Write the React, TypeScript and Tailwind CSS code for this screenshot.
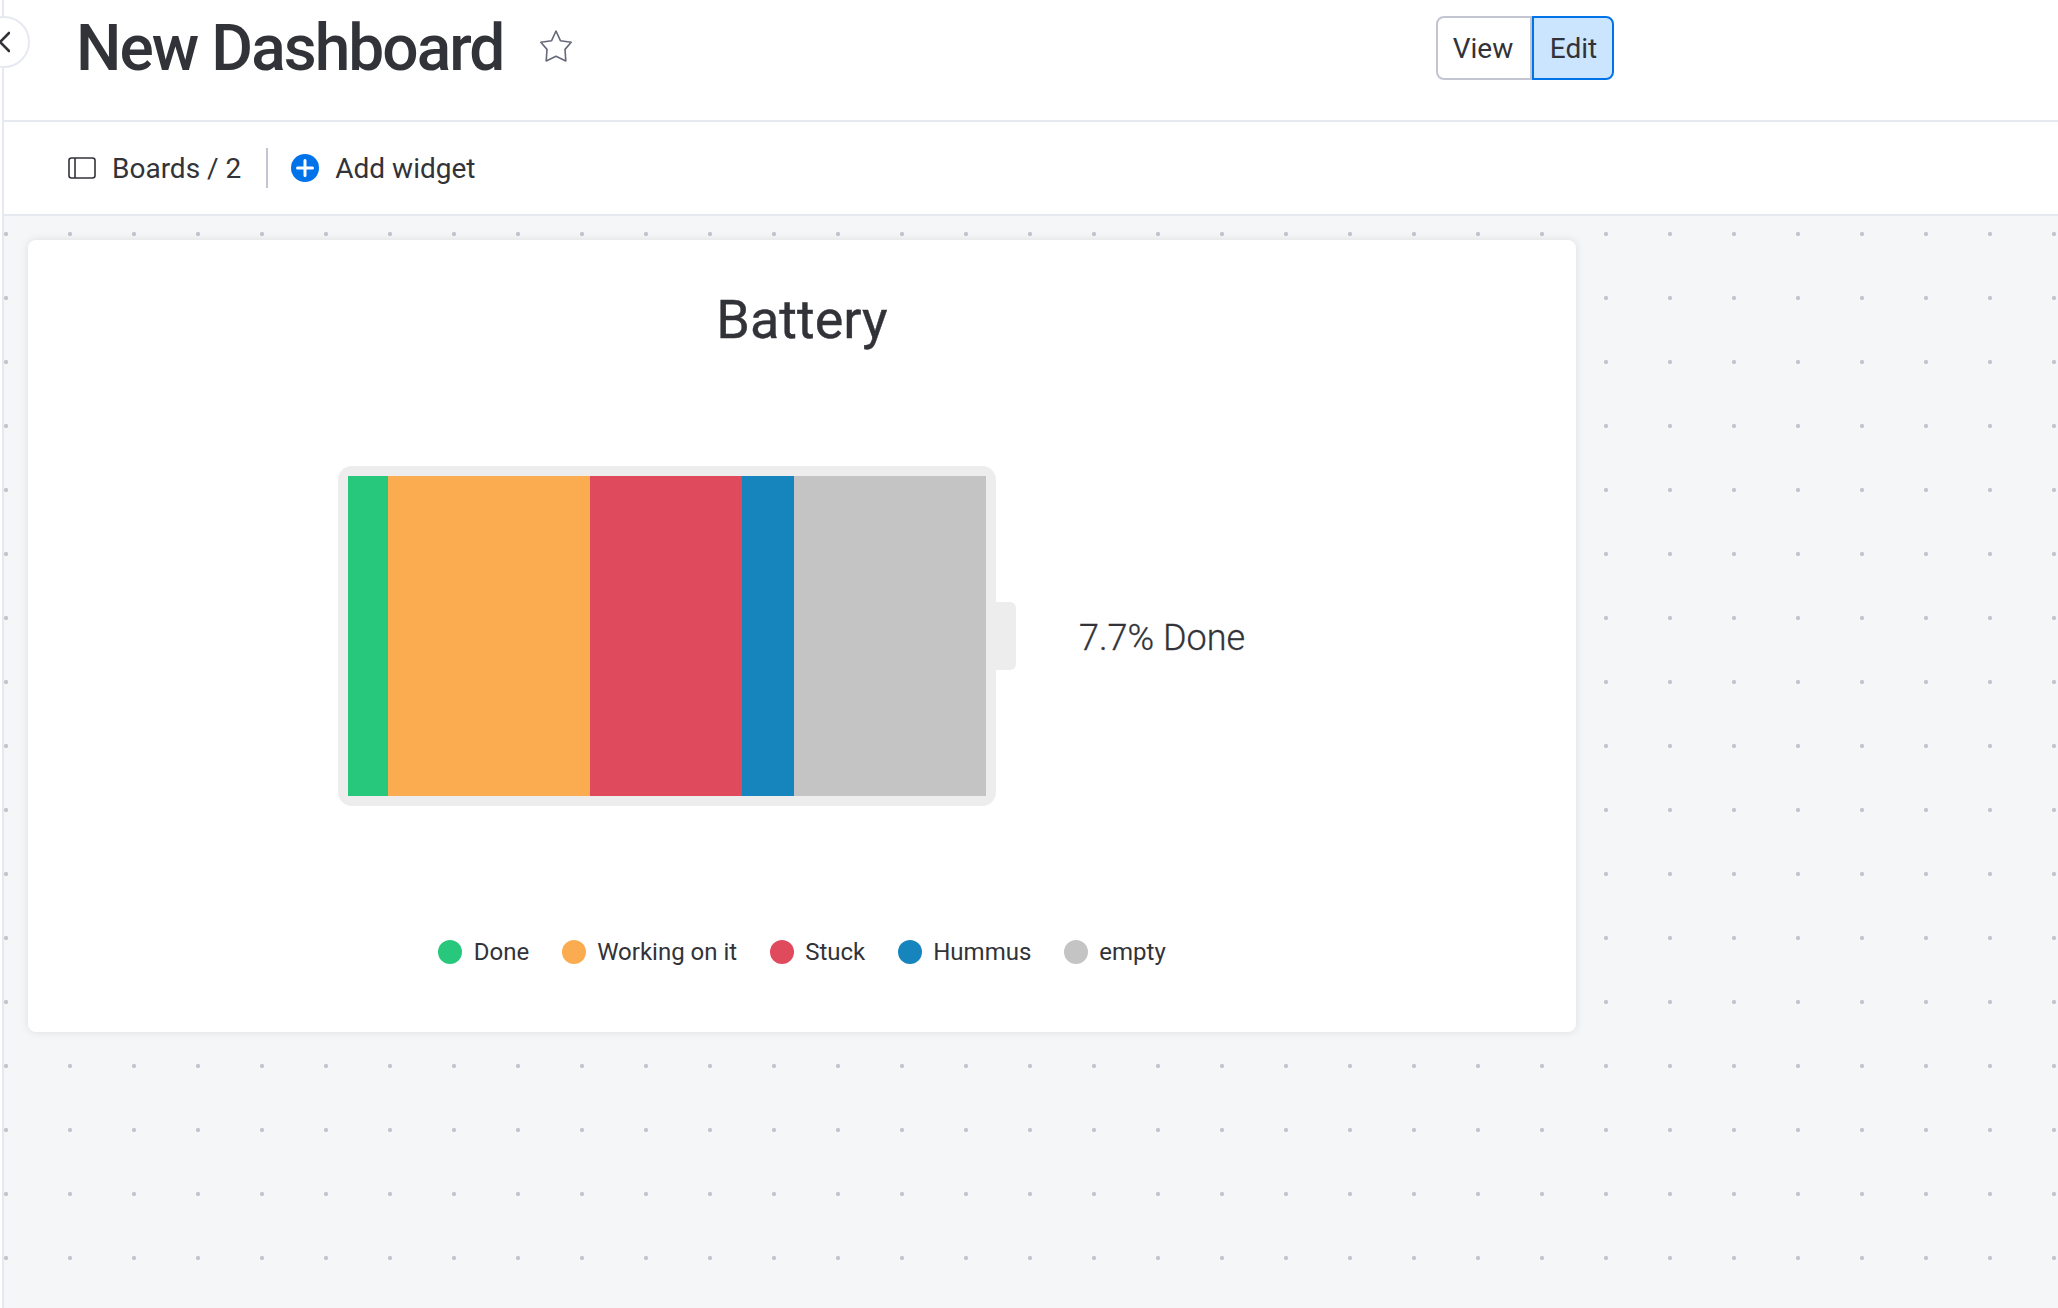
const segments = [
  { label: "Done", color: "bg-[#28c87c]", width: "w-10" },
  { label: "Working on it", color: "bg-[#fbac50]", width: "w-[202px]" },
  { label: "Stuck", color: "bg-[#df4a5c]", width: "w-[152px]" },
  { label: "Hummus", color: "bg-[#1785bd]", width: "w-[52px]" },
  { label: "empty", color: "bg-[#c4c4c4]", width: "w-[192px]" },
];

function Header() {
  return (
    <header className="flex h-[122px] items-start border-b-2 border-[#e6e9ef] bg-white">
      <h1 className="ml-[72px] whitespace-nowrap text-[64px] leading-[98px] font-medium tracking-[-1.95px]">New Dashboard</h1>
      <svg className="mt-[30px] ml-[36.5px] size-8" viewBox="0 0 32 32" fill="none" stroke="#676879" strokeWidth="1.6" strokeLinejoin="round">
        <path d="M16 1 L20.4 10.7 L31.2 12.3 L25 19.4 L25.8 31 L16 26.3 L6.2 31 L7 19.4 L0.8 12.3 L11.6 10.7 Z" />
      </svg>
      <div className="mt-4 mr-[444px] ml-auto flex h-16 text-[28px] leading-[62px]">
        <button className="w-24 rounded-l-lg border-2 border-[#c3c6d0] pr-0.5">View</button>
        <button className="w-[82px] rounded-r-lg border-2 border-[#0073ea] bg-[#cce5ff] pl-px">Edit</button>
      </div>
    </header>
  );
}

function Toolbar() {
  return (
    <div className="flex h-[94px] items-center border-b-2 border-[#e6e9ef] bg-white pl-16 text-[28px]">
      <svg className="h-[22px] w-7" viewBox="0 0 28 22" fill="none" stroke="#323338" strokeWidth="1.6">
        <rect x="1" y="1" width="26" height="20" rx="2.5" />
        <path d="M7 1v20" />
      </svg>
      <span className="ml-4 pt-0.5">Boards / 2</span>
      <span className="ml-[25px] h-10 w-0.5 bg-[#c3c6d0]" />
      <svg className="ml-[23px] size-7" viewBox="0 0 28 28">
        <circle cx="14" cy="14" r="14" fill="#0073ea" />
        <path d="M14 6.5v15M6.5 14h15" stroke="white" strokeWidth="3" strokeLinecap="round" />
      </svg>
      <span className="ml-4 pt-0.5">Add widget</span>
    </div>
  );
}

function BatteryWidget() {
  return (
    <section className="flex h-[792px] w-[1548px] flex-col rounded-lg bg-white shadow-[0_0_8px_rgba(0,0,0,0.1)]">
      <h2 className="mt-12 text-center text-[54px] leading-[64px] [-webkit-text-stroke:0.4px_#323338]">Battery</h2>
      <div className="mt-[114px] ml-[310px] flex items-center">
        <div className="flex h-[340px] w-[658px] rounded-[14px] bg-[#ededed] p-2.5">
          {segments.map((s) => (
            <div key={s.label} className={`h-full shrink-0 ${s.width} ${s.color}`} />
          ))}
        </div>
        <div className="h-[68px] w-5 rounded-r-md bg-[#ededed]" />
        <p className="ml-[63px] pt-1 text-[36px] font-light whitespace-nowrap [-webkit-text-stroke:0.3px_#323338]">7.7% Done</p>
      </div>
      <ul className="mt-[128px] flex justify-center gap-[32.5px] text-2xl leading-9">
        {segments.map((s) => (
          <li key={s.label} className="flex items-center gap-[11.5px]">
            <span className={`size-6 rounded-full ${s.color}`} />
            {s.label}
          </li>
        ))}
      </ul>
    </section>
  );
}

export default function App() {
  return (
    <div className="relative flex h-[1308px] w-[2058px] overflow-hidden bg-[#f5f6f8] font-[Roboto,sans-serif] text-[#323338]">
      <aside className="w-1 shrink-0 border-r-2 border-[#e6e9ef] bg-white" />
      <main className="flex min-w-0 grow flex-col">
        <Header />
        <Toolbar />
        <div className="grow bg-[radial-gradient(circle_at_center,#c3c6d0_1.7px,transparent_2.5px)] bg-[length:64px_64px] bg-[position:-30px_-14px] pt-6 pl-6">
          <BatteryWidget />
        </div>
      </main>
      <button className="absolute top-4 -left-[22px] size-[52px] rounded-full border-2 border-[#e6e9ef] bg-white">
        <svg className="absolute top-3 left-[18px] h-6 w-3" viewBox="0 0 12 24" fill="none" stroke="#323338" strokeWidth="2.6" strokeLinecap="round" strokeLinejoin="round">
          <path d="M11 3 L2 12 L11 21" />
        </svg>
      </button>
    </div>
  );
}
